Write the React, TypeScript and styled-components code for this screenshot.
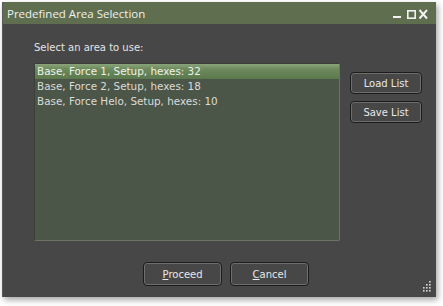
import React from 'react';
import styled, { createGlobalStyle } from 'styled-components';

const GlobalStyle = createGlobalStyle`
  html, body {
    margin: 0;
    padding: 0;
    background: #ffffff;
  }
  body {
    font-family: "DejaVu Sans", "Liberation Sans", sans-serif;
  }
`;

const items = [
  'Base, Force 1, Setup, hexes: 32',
  'Base, Force 2, Setup, hexes: 18',
  'Base, Force Helo, Setup, hexes: 10',
];

const gripDots = [[8, 0], [5, 3], [8, 3], [2, 6], [5, 6], [8, 6], [2, 9], [5, 9], [8, 9]];

const App = () => {
  return (
    <>
      <GlobalStyle />
      <Page>
        <Window>
          <TitleBar>
            <Title>Predefined Area Selection</Title>
            <Controls>
              <svg width="36" height="14" viewBox="0 0 36 14">
                <rect x="0" y="10" width="8" height="2" fill="#f2f2f2" />
                <rect x="14.8" y="4.8" width="7.4" height="7.4" fill="none" stroke="#f2f2f2" strokeWidth="1.6" />
                <path d="M26.5 4 L34 12.5 M34 4 L26.5 12.5" stroke="#f2f2f2" strokeWidth="2" />
              </svg>
            </Controls>
          </TitleBar>
          <Body>
            <Label>Select an area to use:</Label>
            <Main>
              <List>
                {items.map((it, i) => (
                  <Item key={it} selected={i === 0}>{it}</Item>
                ))}
              </List>
              <SideButtons>
                <Button>Load List</Button>
                <Button>Save List</Button>
              </SideButtons>
            </Main>
            <Footer>
              <WideButton><u>P</u>roceed</WideButton>
              <WideButton><u>C</u>ancel</WideButton>
            </Footer>
          </Body>
          <Grip>
            <svg width="11" height="11" viewBox="0 0 11 11">
              {gripDots.map(([x, y], i) => (
                <rect key={i} x={x} y={y} width="1.6" height="1.6" fill="#d8d8d8" />
              ))}
            </svg>
          </Grip>
        </Window>
      </Page>
    </>
  );
};

export default App;

interface ItemProps {
  selected?: boolean;
}

const Page = styled.div`
  width: 443px;
  height: 306px;
  padding: 2px 0 0 2px;
  box-sizing: border-box;
`;

const Window = styled.div`
  position: relative;
  width: 434px;
  height: 295px;
  background: #474747;
  display: flex;
  flex-direction: column;
  box-shadow: 2px 3px 6px rgba(0, 0, 0, 0.35);
  border-left: 1px solid #5a5a5a;
  box-sizing: border-box;
`;

const TitleBar = styled.div`
  height: 22px;
  background: #5e6e4e;
  display: flex;
  align-items: center;
  justify-content: space-between;
  padding: 0 7px 0 4px;
  flex-shrink: 0;
`;

const Title = styled.div`
  color: #f0f0f0;
  font-family: "Open Sans", "Liberation Sans", sans-serif;
  font-size: 11.5px;
`;

const Controls = styled.div`
  display: flex;
  align-items: center;
`;

const Body = styled.div`
  display: flex;
  flex-direction: column;
  padding: 17px 0 0 31px;
`;

const Label = styled.div`
  color: #e4e4e4;
  font-size: 10px;
  line-height: 14px;
  height: 14px;
  margin-bottom: 8px;
`;

const Main = styled.div`
  display: flex;
  gap: 10px;
`;

const List = styled.div`
  width: 306px;
  height: 178px;
  box-sizing: border-box;
  background: #4b5548;
  border-top: 1px solid #3a4038;
  border-left: 1px solid #3a4038;
  border-right: 1px solid #6c7468;
  border-bottom: 1px solid #6c7468;
  border-radius: 2px;
  padding: 0;
`;

const Item = styled.div<ItemProps>`
  height: 15px;
  line-height: 15px;
  padding-left: 2px;
  font-size: 10.4px;
  color: ${p => (p.selected ? '#eef2ea' : '#dcdcd8')};
  background: ${p => (p.selected ? 'linear-gradient(#8aa47a, #6c8a5c 35%, #5c784e)' : 'transparent')};
  white-space: nowrap;
`;

const SideButtons = styled.div`
  display: flex;
  flex-direction: column;
  gap: 7px;
  padding-top: 9px;
`;

const Button = styled.div`
  width: 72px;
  height: 22px;
  box-sizing: border-box;
  border: 1px solid #1c1c1c;
  border-radius: 4px;
  box-shadow: inset 0 0 0 1px #6e6e6e;
  background: #474747;
  color: #e8e8e8;
  font-size: 10px;
  display: flex;
  align-items: center;
  justify-content: center;
`;

const Footer = styled.div`
  display: flex;
  gap: 8px;
  padding: 21px 0 0 109px;
`;

const WideButton = styled(Button)`
  width: 79px;
  height: 24px;

  u {
    text-decoration: underline;
  }
`;

const Grip = styled.div`
  position: absolute;
  right: 4px;
  bottom: 5px;
  width: 11px;
  height: 11px;
  display: flex;
`;
